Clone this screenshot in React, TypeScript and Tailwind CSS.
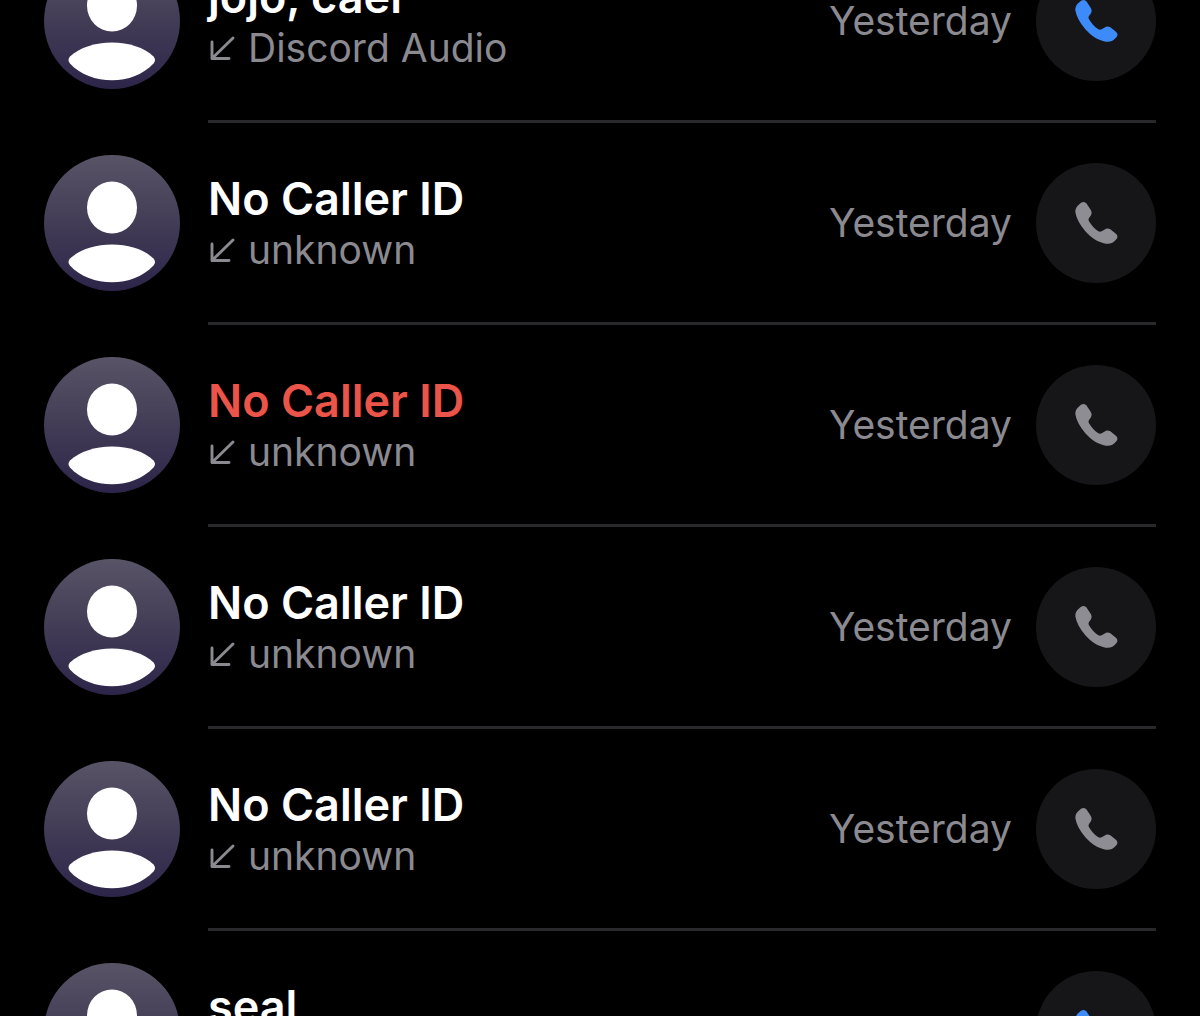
import React from 'react';

interface Call {
  id: number;
  name: string;
  source: string;
  time: string;
  missed?: boolean;
  callable?: boolean;
}

const calls: Call[] = [
  { id: 1, name: 'jojo, cael', source: 'Discord Audio', time: 'Yesterday', callable: true },
  { id: 2, name: 'No Caller ID', source: 'unknown', time: 'Yesterday' },
  { id: 3, name: 'No Caller ID', source: 'unknown', time: 'Yesterday', missed: true },
  { id: 4, name: 'No Caller ID', source: 'unknown', time: 'Yesterday' },
  { id: 5, name: 'No Caller ID', source: 'unknown', time: 'Yesterday' },
  { id: 6, name: 'seal', source: 'Discord Audio', time: 'Yesterday', callable: true },
];

const Avatar = () => (
  <div className="size-[136px] shrink-0 rounded-full bg-linear-to-b from-[#585466] via-[#433c56] to-[#2d2549]">
    <svg viewBox="0 0 136 136" className="size-full" fill="white" aria-hidden="true">
      <ellipse cx="68" cy="52.5" rx="25" ry="26" />
      <path d="M26 103.5C36 94.5 51 89.500 68 89.500S100 94.5 109.500 103.500Q112.500 107 109.500 110.500C99 121.500 84 127.300 68 127.300S36 121.500 26 110.500Q23 107 26 103.500Z" />
    </svg>
  </div>
);

const IncomingArrow = () => (
  <svg viewBox="0 0 28 32" className="h-8 w-7 shrink-0" fill="none" stroke="currentColor" strokeWidth="2.9" strokeLinecap="round" strokeLinejoin="round" aria-hidden="true">
    <path d="M25 6L4 26.500M4 10V26.500H21" />
  </svg>
);

const PhoneIcon = () => (
  <svg viewBox="0 0 210 210" className="size-[70px]" fill="currentColor" aria-hidden="true">
    <path d="M55 49C64 39 74 41 79 50L88 64C93 71 93 77 89 83L84 90C82 94 82 97 85 101C92 113 101 122 111 129C115 132 118 132 122 130L130 125C136 121 142 121 148 124L161 134C170 140 172 147 166 154C157 166 146 169 134 167C112 164 90 149 73 130C56 109 46 91 43 73C42 62 48 54 55 49Z" />
  </svg>
);

const CallRow: React.FC<{ call: Call }> = ({ call }) => (
  <li className="flex gap-7 px-11">
    <div className="pt-8 pb-[34px]">
      <Avatar />
    </div>
    <div className="flex min-w-0 flex-1 items-center gap-6 border-b-3 border-[#29292b]">
      <div className="min-w-0 flex-1 pt-[3px]">
        <h2 className={`text-[45px] leading-[52px] font-semibold ${call.missed ? 'text-[#eb5449]' : 'text-white'}`}>
          {call.name}
        </h2>
        <p className="flex items-center gap-3 text-[39px] leading-[50px]">
          <IncomingArrow />
          <span>{call.source}</span>
        </p>
      </div>
      <span className="text-[39px] leading-[50px]">{call.time}</span>
      <button
        type="button"
        aria-label={`Call ${call.name}`}
        className={`flex size-[120px] shrink-0 items-center justify-center rounded-full bg-[#161618] ${call.callable ? 'text-[#3d8bf8]' : 'text-[#8e8d93]'}`}
      >
        <PhoneIcon />
      </button>
    </div>
  </li>
);

export default function App() {
  return (
    <main className="h-screen overflow-hidden bg-black font-['Inter','Liberation_Sans',sans-serif] text-[#8b8a90]">
      {/* The list is scrolled part-way into its first row */}
      <ul className="-mt-[79px]">
        {calls.map((call) => (
          <CallRow key={call.id} call={call} />
        ))}
      </ul>
    </main>
  );
}
